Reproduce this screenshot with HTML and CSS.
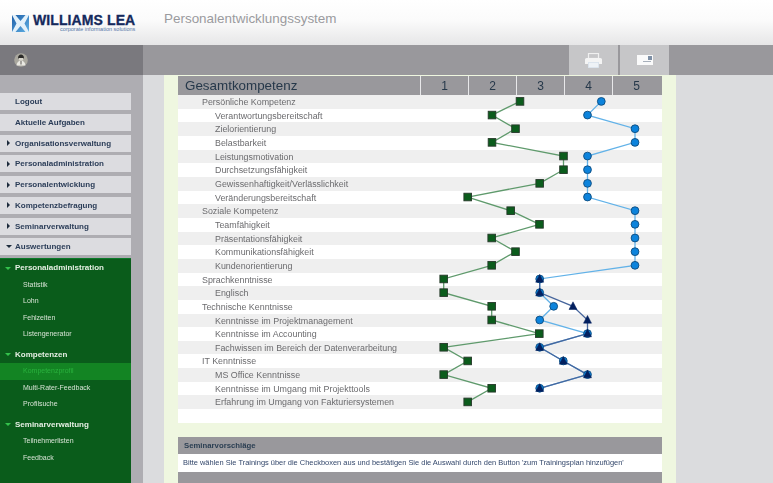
FILE: index.html
```html
<!DOCTYPE html>
<html lang="de">
<head>
<meta charset="utf-8">
<title>Personalentwicklungssystem</title>
<link rel="stylesheet" href="styles.css">
</head>
<body>
<header class="top">
  <div class="logo">
    <svg class="logo-mark" width="17" height="17" viewBox="0 0 17 17"><defs><linearGradient id="lg" x1="0" y1="0" x2="1" y2="1"><stop offset="0" stop-color="#1f5fa8"/><stop offset="1" stop-color="#5fb0e4"/></linearGradient></defs><rect width="17" height="17" fill="url(#lg)"/><path d="M0 0h3.500l5 6 5-6H17l-4.500 8.500L17 17h-3.500l-5-6-5 6H0l4.500-8.500z" fill="#e3f1fa"/></svg>
    <div class="logo-text">
      <div class="logo-name">WILLIAMS LEA</div>
      <div class="logo-sub">corporate information solutions</div>
    </div>
  </div>
  <div class="app-title">Personalentwicklungssystem</div>
</header>
<div class="toolbar">
  <div class="tool-user">
    <svg width="14" height="14" viewBox="0 0 14 14"><circle cx="7" cy="7" r="6.800" fill="#a9a79e"/><path d="M4 5.500C4 2.500 5.500 1.500 7 1.500s3 1 3 4z" fill="#2b2a28"/><rect x="4.800" y="5" width="4.400" height="2.500" fill="#d8d6cc"/><path d="M2.500 12.500c.3-3 1.800-4.800 4.500-4.800s4.200 1.800 4.500 4.800z" fill="#e9e8e2"/><rect x="6.400" y="8" width="1.200" height="3.500" fill="#77756f"/></svg>
  </div>
  <div class="tool-main">
    <div class="tool-btn">
      <svg width="17" height="15" viewBox="0 0 17 15"><rect x="3.500" y="0.500" width="10" height="5" fill="none" stroke="#f0f0f0" stroke-width="1.200"/><path d="M1.500 5h14a1.500 1.500 0 0 1 1.500 1.500V11h-3V9H3v2H0V6.500A1.500 1.500 0 0 1 1.500 5z" fill="#f4f4f4"/><rect x="3.500" y="9.500" width="10" height="5" fill="#eef2f6" stroke="#dce6f0" stroke-width="0.800"/></svg>
    </div>
    <div class="tool-btn">
      <svg width="16" height="10" viewBox="0 0 16 10"><rect width="16" height="10" fill="#fafafa"/><rect x="11" y="1" width="4" height="4" fill="#7d8fa5"/><rect x="6" y="6" width="8" height="1" fill="#a8b0bb"/></svg>
    </div>
  </div>
</div>
<div class="layout">
  <nav class="side">
    <ul class="menu">
      <li class="item plain">Logout</li>
      <li class="item plain">Aktuelle Aufgaben</li>
      <li class="item closed">Organisationsverwaltung</li>
      <li class="item closed">Personaladministration</li>
      <li class="item closed">Personalentwicklung</li>
      <li class="item closed">Kompetenzbefragung</li>
      <li class="item closed">Seminarverwaltung</li>
      <li class="item open">Auswertungen</li>
    </ul>
    <div class="green">
      <div class="g-head">Personaladministration</div>
      <div class="g-sub">Statistik</div>
      <div class="g-sub">Lohn</div>
      <div class="g-sub">Fehlzeiten</div>
      <div class="g-sub">Listengenerator</div>
      <div class="g-head spaced">Kompetenzen</div>
      <div class="g-sub active">Kompetenzprofil</div>
      <div class="g-sub">Multi-Rater-Feedback</div>
      <div class="g-sub">Profilsuche</div>
      <div class="g-head spaced">Seminarverwaltung</div>
      <div class="g-sub">Teilnehmerlisten</div>
      <div class="g-sub">Feedback</div>
    </div>
  </nav>
  <main class="content">
    <div class="panel">
      <section class="chart">
        <div class="chart-head">
          <div class="chart-title">Gesamtkompetenz</div>
          <div class="col">1</div><div class="col">2</div><div class="col">3</div><div class="col">4</div><div class="col">5</div>
        </div>
        <div class="rows">
          <div class="row l1">Persönliche Kompetenz</div>
          <div class="row l2">Verantwortungsbereitschaft</div>
          <div class="row l2">Zielorientierung</div>
          <div class="row l2">Belastbarkeit</div>
          <div class="row l2">Leistungsmotivation</div>
          <div class="row l2">Durchsetzungsfähigkeit</div>
          <div class="row l2">Gewissenhaftigkeit/Verlässlichkeit</div>
          <div class="row l2">Veränderungsbereitschaft</div>
          <div class="row l1">Soziale Kompetenz</div>
          <div class="row l2">Teamfähigkeit</div>
          <div class="row l2">Präsentationsfähigkeit</div>
          <div class="row l2">Kommunikationsfähigkeit</div>
          <div class="row l2">Kundenorientierung</div>
          <div class="row l1">Sprachkenntnisse</div>
          <div class="row l2">Englisch</div>
          <div class="row l1">Technische Kenntnisse</div>
          <div class="row l2">Kenntnisse im Projektmanagement</div>
          <div class="row l2">Kenntnisse im Accounting</div>
          <div class="row l2">Fachwissen im Bereich der Datenverarbeitung</div>
          <div class="row l1">IT Kenntnisse</div>
          <div class="row l2">MS Office Kenntnisse</div>
          <div class="row l2">Kenntnisse im Umgang mit Projekttools</div>
          <div class="row l2">Erfahrung im Umgang von Fakturiersystemen</div>
          <div class="row l2"></div>
          <svg class="plot" id="plot" width="484" height="327" viewBox="0 0 484 327"></svg>
        </div>
      </section>
      <section class="seminar">
        <h2 class="sem-head">Seminarvorschläge</h2>
        <p class="sem-text">Bitte wählen Sie Trainings über die Checkboxen aus und bestätigen Sie die Auswahl durch den Button 'zum Trainingsplan hinzufügen'</p>
        <div class="sem-foot"></div>
      </section>
    </div>
  </main>
</div>
<script src="chart.js"></script>
</body>
</html>
```
FILE: chart.js
```js
var NS = 'http://www.w3.org/2000/svg';
var plot = document.getElementById('plot');
var X0 = 178;
var Y = function (i) { return 6.4 + i * 13.66; };
var green = [520,492,515.5,492,563.5,563.5,539.7,467.7,510.7,539.5,491.7,515.5,491.7,443.7,443.7,491.7,491.7,539.3,443.7,467.7,443.7,491.7,467.7];
var blue = [601.3,587.5,635,635,587.5,587.5,587.5,587.5,635,635,635,635,635,539.7,539.7,553.7,539.7,587.5,539.7,563.3,587.5,539.7];
var dark = {13:539.7,14:539.7,15:573,16:587.5,17:587.5,18:539.7,19:563.3,20:587.5,21:539.7};
function el(name, attrs) {
  var e = document.createElementNS(NS, name);
  for (var k in attrs) e.setAttribute(k, attrs[k]);
  plot.appendChild(e);
  return e;
}
function line(list, idx, color) {
  el('polyline', {
    points: idx.map(function (i) { return (list[i] - X0) + ',' + Y(i); }).join(' '),
    fill: 'none', stroke: color, 'stroke-width': 1.3
  });
}
line(green, green.map(function (_, i) { return i; }), '#5f9a6c');
line(blue, blue.map(function (_, i) { return i; }), '#62b2e8');
line(dark, Object.keys(dark).map(Number), '#46659c');
green.forEach(function (x, i) {
  el('rect', { x: x - X0 - 3.8, y: Y(i) - 3.8, width: 7.6, height: 7.6, fill: '#0b5c1c', stroke: '#26382a', 'stroke-width': 0.9 });
});
blue.forEach(function (x, i) {
  el('circle', { cx: x - X0, cy: Y(i), r: 3.9, fill: '#0c83dc', stroke: '#0f4c7e', 'stroke-width': 0.9 });
});
Object.keys(dark).map(Number).forEach(function (i) {
  var x = dark[i] - X0, y = Y(i);
  el('polygon', { points: x + ',' + (y - 4.5) + ' ' + (x + 4) + ',' + (y + 3.2) + ' ' + (x - 4) + ',' + (y + 3.2), fill: '#03205f', stroke: '#03205f', 'stroke-width': 0.5 });
});
```
FILE: styles.css
```css
* { box-sizing: border-box; }
html, body { margin: 0; padding: 0; }
body {
  width: 773px;
  height: 483px;
  overflow: hidden;
  font-family: "Liberation Sans", Arial, sans-serif;
  background: #dbdcde;
  color: #2c3e50;
  filter: blur(0.3px);
}
.top {
  height: 45px;
  display: flex;
  align-items: flex-start;
  background: linear-gradient(#ffffff 0%, #fbfbfb 45%, #e6e6e7 100%);
}
.logo {
  width: 164px;
  padding: 13px 0 0 12px;
  display: flex;
  gap: 4px;
}
.logo-mark { margin-top: 2px; }
.logo-name {
  font-size: 14px;
  line-height: 12px;
  margin-top: 1px;
  margin-bottom: 1px;
  font-weight: bold;
  color: #14295c;
  -webkit-text-stroke: 0.3px #14295c;
  letter-spacing: 0.1px;
  white-space: nowrap;
}
.logo-sub {
  font-size: 5.500px;
  line-height: 5px;
  color: #5577a8;
  text-align: right;
  white-space: nowrap;
}
.app-title {
  font-size: 13.450px;
  line-height: 16px;
  margin-top: 11px;
  color: #9a9a9e;
  white-space: nowrap;
}
.toolbar { height: 30px; display: flex; background: #99989c; }
.tool-user {
  width: 143px;
  background: #7a797e;
  padding: 8px 0 0 14px;
}
.tool-user svg { display: block; }
.tool-main {
  flex: 1;
  display: flex;
  gap: 2px;
  padding-left: 426px;
}
.tool-btn {
  width: 49px;
  background: #c6c6c8;
  display: flex;
  align-items: center;
  justify-content: center;
}
.layout { height: 408px; display: flex; }
.side {
  width: 143px;
  padding-right: 12px;
  background: #aeadb2;
  display: flex;
  flex-direction: column;
}
.menu {
  list-style: none;
  margin: 0;
  padding: 18px 0 0;
  display: flex;
  flex-direction: column;
  gap: 3.750px;
}
.item {
  height: 17px;
  line-height: 18px;
  padding-left: 15px;
  background: #dcdce0;
  font-size: 8px;
  font-weight: bold;
  color: #2b3d58;
  position: relative;
  white-space: nowrap;
}
.closed::before, .open::before {
  content: "";
  position: absolute;
  width: 0;
  height: 0;
  border-style: solid;
}
.closed::before {
  left: 7px;
  top: 5.500px;
  border-width: 3px 0 3px 3.500px;
  border-color: transparent transparent transparent #1d2b3c;
}
.open::before {
  left: 6px;
  top: 7px;
  border-width: 3.500px 3px 0 3px;
  border-color: #1d2b3c transparent transparent transparent;
}
.green {
  flex: 1;
  margin-top: 3px;
  padding-top: 1px;
  background: #0a5c1b;
  border-top: 1px solid #0b7a2a;
}
.g-head {
  height: 16.500px;
  line-height: 16.500px;
  padding-left: 15px;
  font-size: 8px;
  font-weight: bold;
  color: #e6efe4;
  position: relative;
}
.g-head::before {
  content: "";
  position: absolute;
  left: 5px;
  top: 6.500px;
  width: 0;
  height: 0;
  border-style: solid;
  border-width: 3.500px 3px 0 3px;
  border-color: #34c34c transparent transparent transparent;
}
.spaced { margin-top: 4px; }
.g-sub {
  height: 16.500px;
  line-height: 16.500px;
  padding-left: 23px;
  font-size: 7px;
  color: #d6e2d4;
}
.active { background: #138423; color: #2ab23e; }
.content {
  flex: 1;
  padding: 0 97px 0 21px;
}
.panel {
  height: 408px;
  background: #eff7e0;
  padding: 1px 14px 0;
}
.chart-head {
  height: 19px;
  display: flex;
  background: #99989c;
}
.chart-title {
  width: 242px;
  padding-left: 7px;
  font-size: 13.400px;
  line-height: 20px;
  color: #26384a;
}
.col {
  width: 48px;
  border-left: 1px solid #e8e8ea;
  text-align: center;
  font-size: 12px;
  line-height: 20px;
  color: #26384a;
}
.rows { position: relative; background: #fff; }
.row {
  height: 13.660px;
  line-height: 15px;
  font-size: 8.900px;
  color: #6b6b6e;
  white-space: nowrap;
}
.row:nth-of-type(odd) { background: #efefef; }
.l1 { padding-left: 24px; }
.l2 { padding-left: 37px; }
.plot { position: absolute; left: 0; top: 0; }
.seminar { margin-top: 14px; }
.sem-head {
  margin: 0;
  height: 17.500px;
  line-height: 17.500px;
  padding-left: 6px;
  background: #99989c;
  font-size: 7.750px;
  font-weight: bold;
  color: #2a3e52;
}
.sem-text {
  margin: 0;
  height: 18px;
  line-height: 18px;
  padding-left: 5px;
  background: #fff;
  font-size: 7.460px;
  color: #33476b;
  white-space: nowrap;
}
.sem-foot { height: 12px; background: #99989c; }
```
